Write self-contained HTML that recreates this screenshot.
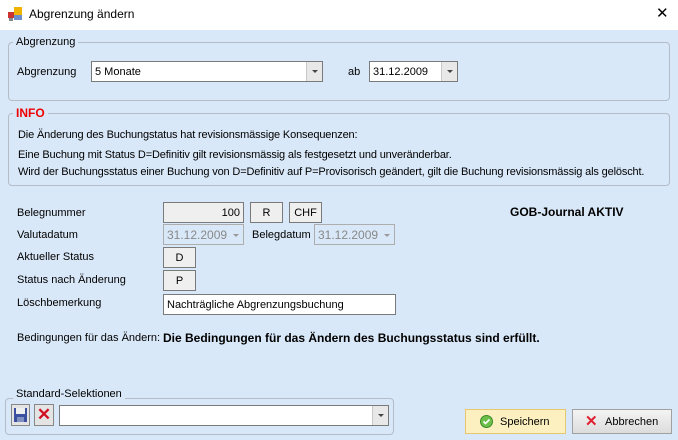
<!DOCTYPE html>
<html><head><meta charset="utf-8"><style>
*{box-sizing:border-box;margin:0;padding:0}
body{width:678px;height:440px;overflow:hidden;background:#d9e8f8;font-family:"Liberation Sans",sans-serif;font-size:11px;color:#000;position:relative}
.a{position:absolute;white-space:nowrap}
.title{position:absolute;left:0;top:0;width:678px;height:30px;background:#fff}
.grp{position:absolute;border:1px solid #b4bcc6;border-radius:4px}
.leg{position:absolute;background:#d9e8f8;padding:0 3px;white-space:nowrap}
.box{position:absolute;border:1px solid #7a7a7a;background:#fff;height:21px;line-height:21px;padding-left:3px}
.gray{background:#efefef}
.dis{position:absolute;border:1px solid #adadad;background:#d9e8f8;color:#888;height:21px;line-height:20px;padding-left:3px;font-size:12px}
.arr{position:absolute;right:0;top:0;width:16px;height:100%;background:#e8e8e8;border-left:1px solid #c8c8c8}
.arr:after{content:"";position:absolute;left:5px;top:8px;border:3px solid transparent;border-top:3px solid #444}
.darr{position:absolute;right:4px;top:9px;border:3px solid transparent;border-top:3px solid #999}
.btn{position:absolute;height:25px;line-height:23px;border:1px solid #a0a0a0;background:linear-gradient(#f4f4f4,#dcdcdc)}
</style></head><body>
<div class="title">
<svg class="a" style="left:8px;top:7px" width="14" height="14"><rect x="0" y="5" width="6" height="6" fill="#c33"/><rect x="6" y="0" width="8" height="8" fill="#f0b400"/><rect x="6" y="8" width="8" height="5" fill="#6a8ed0"/><rect x="1" y="11" width="4" height="3" fill="#888"/></svg>
<div class="a" style="left:29px;top:7px;font-size:12px">Abgrenzung ändern</div>
<div class="a" style="left:656px;top:4px;font-size:15px">✕</div>
</div>

<div class="grp" style="left:8px;top:42px;width:662px;height:59px"></div>
<div class="leg" style="left:13px;top:36px">Abgrenzung</div>
<div class="a" style="left:17px;top:66px">Abgrenzung</div>
<div class="box" style="left:91px;top:61px;width:232px">5 Monate<div class="arr"></div></div>
<div class="a" style="left:348px;top:66px">ab</div>
<div class="box" style="left:369px;top:61px;width:89px">31.12.2009<div class="arr"></div></div>

<div class="grp" style="left:8px;top:113px;width:662px;height:73px"></div>
<div class="leg" style="left:13px;top:106px;color:#e00;font-weight:bold;font-size:12px">INFO</div>
<div class="a" style="left:18px;top:129px;letter-spacing:-0.15px">Die Änderung des Buchungstatus hat revisionsmässige Konsequenzen:</div>
<div class="a" style="left:18px;top:149px;letter-spacing:-0.15px">Eine Buchung mit Status D=Definitiv gilt revisionsmässig als festgesetzt und unveränderbar.</div>
<div class="a" style="left:18px;top:166px;letter-spacing:-0.15px">Wird der Buchungsstatus einer Buchung von D=Definitiv auf P=Provisorisch geändert, gilt die Buchung revisionsmässig als gelöscht.</div>

<div class="a" style="left:17px;top:207px">Belegnummer</div>
<div class="a" style="left:17px;top:229px">Valutadatum</div>
<div class="a" style="left:17px;top:251px">Aktueller Status</div>
<div class="a" style="left:17px;top:274px">Status nach Änderung</div>
<div class="a" style="left:17px;top:297px">Löschbemerkung</div>
<div class="a" style="left:17px;top:332px">Bedingungen für das Ändern:</div>
<div class="a" style="left:163px;top:331px;font-weight:bold;font-size:12px">Die Bedingungen für das Ändern des Buchungsstatus sind erfüllt.</div>
<div class="a" style="left:510px;top:205px;font-weight:bold;font-size:12px">GOB-Journal AKTIV</div>

<div class="box gray" style="left:163px;top:202px;width:81px;text-align:right;padding-right:3px">100</div>
<div class="box gray" style="left:250px;top:202px;width:33px;text-align:center;padding:0">R</div>
<div class="box gray" style="left:289px;top:202px;width:33px;text-align:center;padding:0">CHF</div>
<div class="dis" style="left:163px;top:224px;width:81px">31.12.2009<div class="darr"></div></div>
<div class="a" style="left:252px;top:229px">Belegdatum</div>
<div class="dis" style="left:314px;top:224px;width:81px">31.12.2009<div class="darr"></div></div>
<div class="box gray" style="left:163px;top:247px;width:33px;text-align:center;padding:0">D</div>
<div class="box gray" style="left:163px;top:270px;width:33px;text-align:center;padding:0">P</div>
<div class="box" style="left:163px;top:294px;width:233px">Nachträgliche Abgrenzungsbuchung</div>

<div class="grp" style="left:5px;top:398px;width:389px;height:37px"></div>
<div class="leg" style="left:13px;top:388px">Standard-Selektionen</div>
<div class="a" style="left:11px;top:404px;width:19px;height:22px;border:1px solid #888;background:#e4e4e4">
<svg width="17" height="20"><rect x="2" y="3" width="13" height="14" fill="#3a4fa0"/><rect x="4" y="3" width="9" height="6" fill="#eee"/><rect x="5" y="12" width="7" height="5" fill="#8090c0"/></svg></div>
<div class="a" style="left:34px;top:404px;width:20px;height:22px;border:1px solid #888;background:#e4e4e4;color:#d01020;font-weight:bold;font-size:17px;text-align:center;line-height:20px">✕</div>
<div class="box" style="left:59px;top:405px;width:330px;height:21px"><div class="arr"></div></div>

<div class="btn" style="left:465px;top:409px;width:101px;background:#fdf0c0;border-color:#e6c870">
<svg class="a" style="left:14px;top:5px" width="13" height="13"><circle cx="6.5" cy="6.5" r="6" fill="#6cc04a" stroke="#3d8a2a"/><path d="M3.5 6.5l2 2 4-4" stroke="#fff" stroke-width="1.6" fill="none"/></svg>
<span class="a" style="left:34px;top:1px">Speichern</span></div>
<div class="btn" style="left:572px;top:409px;width:100px">
<span class="a" style="left:12px;top:0;color:#e02030;font-weight:bold;font-size:15px">✕</span>
<span class="a" style="left:32px;top:1px">Abbrechen</span></div>
</body></html>
